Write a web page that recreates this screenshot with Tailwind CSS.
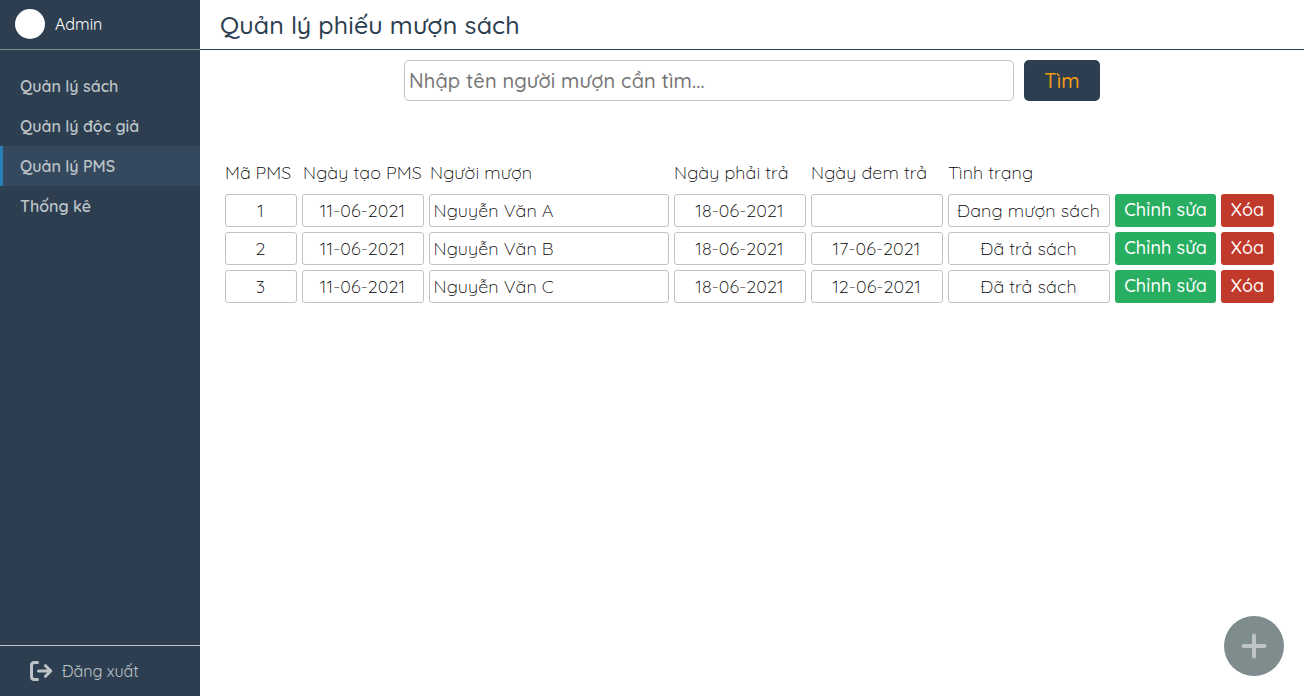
<!DOCTYPE html>
<html lang="vi">
<head>
<meta charset="utf-8">
<title>Quản lý phiếu mượn sách</title>
<script src="https://cdn.jsdelivr.net/npm/@tailwindcss/browser@4"></script>
</head>
<body class="flex h-screen overflow-hidden bg-white font-['Quicksand','Inter',sans-serif]">
  <aside class="flex w-[200px] shrink-0 flex-col bg-[#2c3e50] text-[#bdc3c7]">
    <div class="flex h-[50px] items-center gap-2.5 border-b border-[#7f8c8d] pb-px pl-[15px] text-white">
      <div class="size-[30px] rounded-full bg-white"></div>
      <span class="text-base">Admin</span>
    </div>
    <nav class="flex flex-1 flex-col pt-4 text-base font-semibold *:flex *:h-10 *:items-center *:border-l-3 *:pl-[17px]">
      <a class="border-transparent">Quản lý sách</a>
      <a class="border-transparent">Quản lý độc giả</a>
      <a class="border-[#2980b9] bg-[#34495e]">Quản lý PMS</a>
      <a class="border-transparent">Thống kê</a>
    </nav>
    <div class="flex h-[51px] items-center border-t border-[#bdc3c7] pl-[29px]">
      <svg class="h-[22px] w-6" viewBox="0 0 24 22" fill="none" stroke="#bdc3c7" stroke-width="3" stroke-linecap="round" stroke-linejoin="round"><path d="M8.500 2.500H5.500Q2.500 2.500 2.500 5.500V16.500Q2.500 19.500 5.500 19.500H8.500M9.500 11H21.500M16.500 5.700L21.800 11L16.500 16.300"/></svg>
      <span class="pl-[9px] text-base">Đăng xuất</span>
    </div>
  </aside>

  <main class="flex flex-1 flex-col">
    <h1 class="flex h-[50px] items-center border-b border-[#2c3e50] pl-5 text-[25px] font-medium tracking-[0.12px] text-[#2c3e50]">Quản lý phiếu mượn sách</h1>
    <div class="flex justify-center gap-2.5 pt-2.5 text-xl">
      <div class="flex h-[41px] w-[610px] items-center rounded-[5px] border border-[#bdc3c7] pl-[4px] font-medium tracking-[0.16px] text-[#757575]">Nhập tên người mượn cần tìm...</div>
      <button class="h-[41px] w-[76px] rounded-[5px] bg-[#2c3e50] font-medium tracking-[0.1px] text-[#f39c12]">Tìm</button>
    </div>

    <div class="mt-[52px] ml-[25px] flex flex-col gap-[5px] text-lg font-light tracking-[0.12px] text-black">
      <div class="flex h-9 items-center gap-[5px] pt-1 *:shrink-0 *:whitespace-nowrap">
        <span class="w-[72px] tracking-normal">Mã PMS</span>
        <span class="w-[122px] pl-px">Ngày tạo PMS</span>
        <span class="w-[240px] pl-px">Người mượn</span>
        <span class="w-[132px]">Ngày phải trả</span>
        <span class="w-[132px]">Ngày đem trả</span>
        <span class="w-[162px]">Tình trạng</span>
      </div>
      <div id="rows" class="flex flex-col gap-[5px]"></div>
    </div>
  </main>

  <button class="fixed right-5 bottom-5 flex size-[60px] items-center justify-center rounded-full bg-[#7f8c8d]" aria-label="Thêm">
    <svg class="size-[26px]" viewBox="0 0 26 26" stroke="#bdc3c7" stroke-width="4" stroke-linecap="round"><path d="M13 2.500V23.500M2.500 13H23.500"/></svg>
  </button>

<script>
const loans = [
  ['1', '11-06-2021', 'Nguyễn Văn A', '18-06-2021', '', 'Đang mượn sách'],
  ['2', '11-06-2021', 'Nguyễn Văn B', '18-06-2021', '17-06-2021', 'Đã trả sách'],
  ['3', '11-06-2021', 'Nguyễn Văn C', '18-06-2021', '12-06-2021', 'Đã trả sách'],
];
const cell = [
  'w-[72px] justify-center',
  'w-[122px] justify-center',
  'w-[240px] pl-[3.5px]',
  'w-[132px] justify-center',
  'w-[132px] justify-center',
  'w-[162px] justify-center',
];
document.getElementById('rows').innerHTML = loans.map(r =>
  '<div class="flex gap-[5px]">' +
  r.map((v, i) => `<div class="flex h-[33px] shrink-0 items-center whitespace-nowrap rounded-[3px] border border-[#bdc3c7] pr-px ${cell[i]}">${v}</div>`).join('') +
  '<button class="h-[33px] w-[101px] rounded-[3px] bg-[#27ae60] pb-0.5 font-medium text-white">Chỉnh sửa</button>' +
  '<button class="h-[33px] w-[53px] rounded-[3px] bg-[#c0392b] pb-0.5 font-medium text-white">Xóa</button></div>').join('');
</script>
</body>
</html>
